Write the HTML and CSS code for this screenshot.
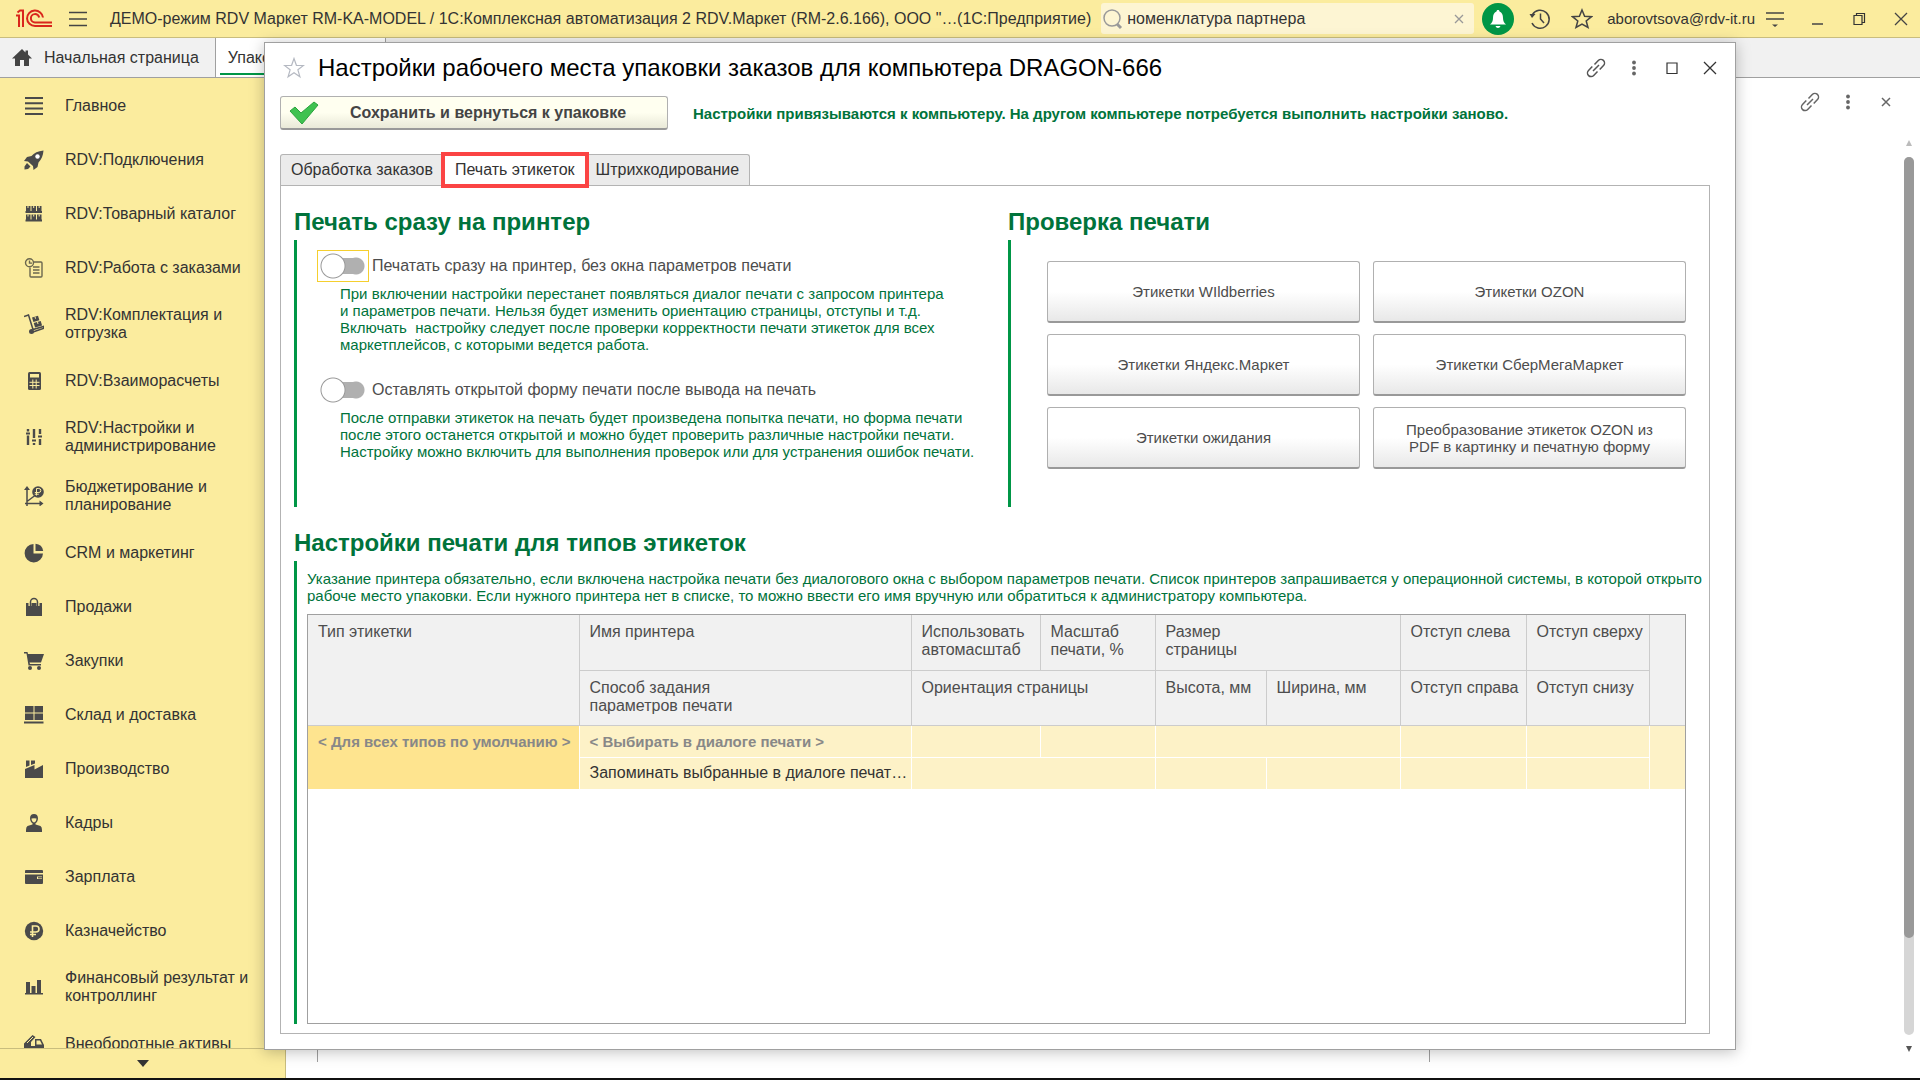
FILE: index.html
```html
<!DOCTYPE html>
<html lang="ru">
<head>
    <meta charset="UTF-8">
    <meta name="viewport" content="width=device-width, initial-scale=1.0">
    <title>Настройки рабочего места упаковки заказов</title>
    <link rel="stylesheet" href="styles.css">
</head>
<body>

    <header class="topbar">
        <svg class="logo" width="38" height="20" viewBox="0 0 38 20" fill="none" stroke="#d9261c" stroke-width="2">
            <path d="M1 6.500h3V18M2.500 3.500L5 1.500h3V18" />
            <path d="M28 8.500a8 7.700 0 1 0-8 8.500h17" />
            <path d="M24.200 8.500a4.200 4.200 0 1 0-4.200 5h17" />
        </svg>
        <button class="icon-btn menu-btn" aria-label="Меню">
            <svg width="20" height="18" viewBox="0 0 20 18" stroke="#444" stroke-width="1.5"><path d="M1 2.5h18M1 9h18M1 15.5h18" /></svg>
        </button>
        <span class="app-title">ДЕМО-режим RDV Маркет RM-KA-MODEL / 1С:Комплексная автоматизация 2 RDV.Маркет (RM-2.6.166), ООО "…</span>
        <span class="app-kind">(1С:Предприятие)</span>
        <div class="search">
            <svg width="22" height="22" viewBox="0 0 22 22" fill="none" stroke="#999"><circle cx="10" cy="10" r="8" stroke-width="1.5" /><path d="M15 16l4 4" stroke-width="3" /></svg>
            <input type="text" value="номенклатура партнера" aria-label="Поиск">
            <button class="icon-btn" aria-label="Очистить">
                <svg width="10" height="10" viewBox="0 0 10 10" stroke="#999" stroke-width="1.3"><path d="M1 1l8 8M9 1l-8 8" /></svg>
            </button>
        </div>
        <button class="icon-btn bell" aria-label="Уведомления">
            <svg width="20" height="20" viewBox="0 0 20 20" fill="#fff"><path d="M10 1c-1 0-1.500.700-1.500 1.500C6 3.500 5 6 5 9c0 3-1 5-3 6.500h16C16 14 15 12 15 9c0-3-1-5.500-3.500-6.500C11.500 1.700 11 1 10 1zM7.500 17h5c-.5 1.300-1.300 2-2.500 2s-2-.7-2.500-2z" /></svg>
        </button>
        <div class="top-tools">
            <button class="icon-btn" aria-label="История">
                <svg width="22" height="22" viewBox="0 0 22 22" fill="none" stroke="#444" stroke-width="1.5"><path d="M3.500 6.500A9 9 0 1 1 3 15M11.500 5.500V11l3.500 4" /><path d="M.5 6h6L3 10z" fill="#444" stroke="none" /></svg>
            </button>
            <button class="icon-btn" aria-label="Избранное">
                <svg width="22" height="22" viewBox="0 0 22 22" fill="none" stroke="#444" stroke-width="1.5"><path d="M11 2l2.600 6.300 6.900.4-5.300 4.300 1.800 6.500L11 16l-6 3.500 1.800-6.500L1.500 8.700l6.900-.4z" /></svg>
            </button>
        </div>
        <a class="user" href="#">aborovtsova@rdv-it.ru</a>
        <div class="win-tools">
            <button class="icon-btn" aria-label="Сервис">
                <svg width="20" height="20" viewBox="0 0 20 20" stroke="#444" stroke-width="1.500"><path d="M1 4h18M1 10h18" /><path d="M7 15.500h6L10 18z" fill="#444" stroke="none" /></svg>
            </button>
            <button class="icon-btn" aria-label="Свернуть">
                <svg width="20" height="20" viewBox="0 0 20 20" stroke="#444" stroke-width="1.500"><path d="M5 15h11" /></svg>
            </button>
            <button class="icon-btn" aria-label="Восстановить">
                <svg width="20" height="20" viewBox="0 0 20 20" fill="none" stroke="#333" stroke-width="1.200"><path d="M5 6.500h8v9H5zM7.500 6.500V4.500h8v9H13" /></svg>
            </button>
            <button class="icon-btn" aria-label="Закрыть">
                <svg width="20" height="20" viewBox="0 0 20 20" stroke="#444" stroke-width="1.300"><path d="M4 4l12 12M16 4L4 16" /></svg>
            </button>
        </div>
    </header>

    <nav class="page-tabs">
        <a class="page-tab" href="#">
            <svg width="20" height="18" viewBox="0 0 20 18" fill="#444"><path d="M10 0L0 9.500h3V17h5v-6h4v6h5V9.500h3L16 5.500V1.500h-2.500v2z" /></svg>
            Начальная страница
        </a>
        <a class="page-tab current" href="#">Упако</a>
    </nav>

    <div class="main">
        <aside class="sidebar">
            <ul class="sections">
                <li><a href="#">
                    <svg viewBox="0 0 20 20" stroke="#4a4a4a" stroke-width="2"><path d="M1 2h18M1 7.300h18M1 12.600h18M1 18h18" /></svg>
                    <span>Главное</span></a></li>
                <li><a href="#">
                    <svg viewBox="0 0 20 20"><path d="M19.500.500C14 1 10 3 7.500 6L3 7 0 11l4 .5L9 16l.5 4 4-3 1-4.500c3-3 4.700-7 5-12zM3 13l-2.500 3.500L.500 19.500 4 19l2.500-2.500z" /><circle cx="13.500" cy="6.500" r="2.200" fill="#fff" /></svg>
                    <span>RDV:Подключения</span></a></li>
                <li><a href="#">
                    <svg viewBox="0 0 20 20"><path d="M2 2h4.500v6H2zM7.500 2H12v6H7.500zM13 2h4.500v6H13zM2 10.500h4.500V16H2zM7.500 10.500H12V16H7.500zM13 10.500h4.500V16H13zM1.500 7h16.500v2H1.500zM1.500 15.500h16.500v2H1.500z" /><path d="M4 2v2M9.700 2v2M15.200 2v2M4 10.500v2M9.700 10.500v2M15.200 10.500v2" stroke="#fbec9e" /></svg>
                    <span>RDV:Товарный каталог</span></a></li>
                <li><a href="#">
                    <svg viewBox="0 0 20 20"><g fill="none" stroke="#6b674f" stroke-width="1.400"><path d="M9.500 4H17a1 1 0 0 1 1 1v13a1 1 0 0 1-1 1H7a1 1 0 0 1-1-1V9.500M9 9h6.500M9 12h6.500M9 15h6.500" /><circle cx="5.500" cy="4.800" r="4" /><path d="M5.500 2.500v2.600H8" /></g></svg>
                    <span>RDV:Работа с заказами</span></a></li>
                <li><a href="#">
                    <svg viewBox="0 0 20 20"><path d="M0 2.500L4.500 1 9 15.500l10.500-3 .5 1.800L9 18" fill="none" stroke="#4a4a4a" stroke-width="1.500" /><circle cx="7.500" cy="17.500" r="2.500" /><path d="M8 3.500l6-1.700 1.400 4.500-6 1.800zM9.700 9l7-2 1.400 4.500-7 2z" /><path d="M11 2.700l.5 2M13.500 8l.5 2" stroke="#fbec9e" /></svg>
                    <span>RDV:Комплектация и отгрузка</span></a></li>
                <li><a href="#">
                    <svg viewBox="0 0 20 20"><rect x="4" y="1" width="13" height="18" rx="1.500" /><path d="M6 3h9v3.500H6z" fill="#fbec9e" /><path d="M5.500 11.300h10M5.500 14.500h10M8.800 8.500v9M12.200 8.500v9" stroke="#fbec9e" /></svg>
                    <span>RDV:Взаиморасчеты</span></a></li>
                <li><a href="#">
                    <svg viewBox="0 0 20 20" stroke="#4a4a4a"><path d="M4 2v2.500M4 8.500V18M10 2v9M10 16v2M16 2v5M16 12v6" stroke-width="2.400" /><path d="M2 6.500h4M8 13.500h4M14 9.500h4" stroke-width="2" /></svg>
                    <span>RDV:Настройки и администрирование</span></a></li>
                <li><a href="#">
                    <svg viewBox="0 0 20 20"><path d="M3 2v18M1 17.500h17M3 15.500l8-6" fill="none" stroke="#4a4a4a" stroke-width="1.500" /><path d="M0 4l3-4 3 4zM15.500 14.500l4 3-4 3z" /><circle cx="14" cy="6" r="5.800" /><path d="M12.500 9.500v-7h2.300a2 2 0 0 1 0 4h-4M10.800 8.200h4" fill="none" stroke="#fbec9e" /></svg>
                    <span>Бюджетирование и планирование</span></a></li>
                <li><a href="#">
                    <svg viewBox="0 0 20 20"><path d="M9.500 1v9.500H19A9.200 9.200 0 1 1 9.500 1z" /><path d="M11.500.800A8.600 8.600 0 0 1 19.200 8H11.500z" /></svg>
                    <span>CRM и маркетинг</span></a></li>
                <li><a href="#">
                    <svg viewBox="0 0 20 20"><path d="M2 6h16v13H2z" /><path d="M6 9V5a4 3.800 0 0 1 8 0v4" fill="none" stroke="#fbec9e" stroke-width="3" /><path d="M6.500 9V5a3.500 3.500 0 0 1 7 0v4" fill="none" stroke="#4a4a4a" stroke-width="1.500" /></svg>
                    <span>Продажи</span></a></li>
                <li><a href="#">
                    <svg viewBox="0 0 20 20"><path d="M0 1h3.500l.5 2h16l-3 8.500H5.500l.5 1.500h11v1.500H4.500L2.500 2.500H0z" /><circle cx="6" cy="17" r="2" /><circle cx="15" cy="17" r="2" /></svg>
                    <span>Закупки</span></a></li>
                <li><a href="#">
                    <svg viewBox="0 0 20 20"><path d="M1 1h8.500v6.500H1zM10.500 1H19v6.500h-8.500zM1 8.500h8.500V15H1zM10.500 8.500H19V15h-8.500zM0 16.500h19.500v2H0z" /></svg>
                    <span>Склад и доставка</span></a></li>
                <li><a href="#">
                    <svg viewBox="0 0 20 20"><path d="M1 19v-9l9.500-4v4.500L19 6v13zM2 1.500h3.500v5L2 8zM7 1.500h4v3L7 6z" /></svg>
                    <span>Производство</span></a></li>
                <li><a href="#">
                    <svg viewBox="0 0 20 20"><path d="M10 1c2.500 0 4 1.500 4 4.300 0 2.200-1 4.200-2.500 5v1.200l5 1.500q1.500 1 1.500 4v2H2v-2q0-3 1.500-4l5-1.500v-1.200C7 9.500 6 7.500 6 5.300 6 2.500 7.500 1 10 1z" /><path d="M7.500 5.500q2.500-.5 5 0-.2 3.500-2.500 4-2.300-.5-2.500-4z" fill="#fbec9e" /></svg>
                    <span>Кадры</span></a></li>
                <li><a href="#">
                    <svg viewBox="0 0 20 20"><path d="M1 6V4q0-1 1-1h16q1 0 1 1v2zM1 7.500h18V16q0 1-1 1H2q-1 0-1-1z" /><path d="M13 9.500h5V12h-5z" fill="#fbec9e" /><path d="M14 10.200h4v1.200h-4z" /></svg>
                    <span>Зарплата</span></a></li>
                <li><a href="#">
                    <svg viewBox="0 0 20 20"><circle cx="10" cy="10" r="9.200" /><path d="M8.500 16V5H12a3 3 0 0 1 0 6H6M6 13.500h6" fill="none" stroke="#fbec9e" stroke-width="1.600" /></svg>
                    <span>Казначейство</span></a></li>
                <li><a href="#">
                    <svg viewBox="0 0 20 20"><path d="M2 5h4v11H2zM7.500 9h4v7h-4zM13 3h4v13h-4zM1 16h18v1.500H1z" /></svg>
                    <span>Финансовый результат и контроллинг</span></a></li>
                <li><a href="#">
                    <svg viewBox="0 0 20 20"><path d="M0 9.500L8.500 1l3 2L7 8v4h4V5h6l3 6v6h-2a2.500 2.500 0 0 0-5 0H8a2.500 2.500 0 0 0-5 0H0z" /><path d="M12.500 6.500H16l2 4h-5.500z" fill="#fbec9e" /><path d="M3 9l6-6" stroke="#fbec9e" /><circle cx="5.500" cy="17.500" r="2" /><circle cx="15.500" cy="17.500" r="2" /></svg>
                    <span>Внеоборотные активы</span></a></li>
            </ul>
            <button class="scroll-more" aria-label="Прокрутить вниз">
                <svg width="12" height="7" viewBox="0 0 12 7" fill="#333"><path d="M0 0h12L6 7z" /></svg>
            </button>
        </aside>

        <div class="workspace">
            <div class="workspace-tools">
                <button class="icon-btn" aria-label="Ссылка">
                    <svg width="20" height="20" viewBox="0 0 20 20" fill="none" stroke="#666" stroke-width="1.500"><path d="M8.500 6.500l3.800-4a3.500 3.500 0 0 1 5.200 5l-3.800 4M11.500 13.500l-3.800 4a3.500 3.500 0 0 1-5.200-5l3.800-4M7 13l6-6" /></svg>
                </button>
                <button class="icon-btn" aria-label="Ещё">
                    <svg width="20" height="20" viewBox="0 0 20 20" fill="#666"><circle cx="10" cy="4.500" r="1.900" /><circle cx="10" cy="10" r="1.900" /><circle cx="10" cy="15.500" r="1.900" /></svg>
                </button>
                <button class="icon-btn" aria-label="Закрыть">
                    <svg width="20" height="20" viewBox="0 0 20 20" stroke="#666" stroke-width="1.500"><path d="M6 6l8 8M14 6l-8 8" /></svg>
                </button>
            </div>
            <div class="workspace-body"></div>
            <div class="scrollbar">
                <svg width="6" height="6" viewBox="0 0 6 6" fill="#bbb"><path d="M3 0l3 6H0z" /></svg>
                <div class="track"><div class="thumb"></div></div>
                <svg width="6" height="6" viewBox="0 0 6 6" fill="#555"><path d="M0 0h6L3 6z" /></svg>
            </div>
        </div>
    </div>

    <div class="dialog" role="dialog" aria-labelledby="dialog-title">
        <div class="dialog-head">
            <button class="icon-btn" aria-label="В избранное">
                <svg width="22" height="22" viewBox="0 0 22 22" fill="none" stroke="#b5b9c2" stroke-width="1.200"><path d="M11 1.500l2.400 6.800 7.100.2-5.600 4.300 2 7L11 15.700l-5.900 4.100 2-7L1.500 8.500l7.100-.2z" /></svg>
            </button>
            <h1 id="dialog-title">Настройки рабочего места упаковки заказов для компьютера DRAGON-666</h1>
            <div class="dialog-tools">
                <button class="icon-btn" aria-label="Ссылка">
                    <svg width="20" height="20" viewBox="0 0 20 20" fill="none" stroke="#555" stroke-width="1.500"><path d="M8.500 6.500l3.800-4a3.500 3.500 0 0 1 5.200 5l-3.800 4M11.500 13.500l-3.800 4a3.500 3.500 0 0 1-5.200-5l3.800-4M7 13l6-6" /></svg>
                </button>
                <button class="icon-btn" aria-label="Ещё">
                    <svg width="20" height="20" viewBox="0 0 20 20" fill="#666"><circle cx="10" cy="4.500" r="1.900" /><circle cx="10" cy="10" r="1.900" /><circle cx="10" cy="15.500" r="1.900" /></svg>
                </button>
                <button class="icon-btn" aria-label="Развернуть">
                    <svg width="20" height="20" viewBox="0 0 20 20" fill="none" stroke="#333" stroke-width="1.200"><path d="M5 5h10v10.500H5z" /></svg>
                </button>
                <button class="icon-btn" aria-label="Закрыть">
                    <svg width="20" height="20" viewBox="0 0 20 20" stroke="#333" stroke-width="1.300"><path d="M4 4l12 12M16 4L4 16" /></svg>
                </button>
            </div>
        </div>

        <div class="command-bar">
            <button class="save-btn">
                <svg width="30" height="24" viewBox="0 0 30 24"><path d="M1 10l5-4 6 6L25 1l4 3-16 19z" fill="#3fc250" stroke="#2ba33d" /></svg>
                Сохранить и вернуться к упаковке
            </button>
            <p class="note">Настройки привязываются к компьютеру. На другом компьютере потребуется выполнить настройки заново.</p>
        </div>

        <div class="tabs" role="tablist">
            <button class="tab" role="tab">Обработка заказов</button>
            <button class="tab active" role="tab" aria-selected="true">Печать этикеток</button>
            <button class="tab" role="tab">Штрихкодирование</button>
        </div>

        <div class="panel">
            <div class="top-groups">
                <section class="group">
                    <h2>Печать сразу на принтер</h2>
                    <div class="group-body">
                        <label class="switch focused">
                            <input type="checkbox">
                            Печатать сразу на принтер, без окна параметров печати
                        </label>
                        <p class="hint">При включении настройки перестанет появляться диалог печати с запросом принтера<br>и параметров печати. Нельзя будет изменить ориентацию страницы, отступы и т.д.<br>Включать&nbsp; настройку следует после проверки корректности печати этикеток для всех<br>маркетплейсов, с которыми ведется работа.</p>
                        <label class="switch">
                            <input type="checkbox">
                            Оставлять открытой форму печати после вывода на печать
                        </label>
                        <p class="hint">После отправки этикеток на печать будет произведена попытка печати, но форма печати<br>после этого останется открытой и можно будет проверить различные настройки печати.<br>Настройку можно включить для выполнения проверок или для устранения ошибок печати.</p>
                    </div>
                </section>

                <section class="group">
                    <h2>Проверка печати</h2>
                    <div class="group-body print-tests">
                        <button class="test-btn">Этикетки WIldberries</button>
                        <button class="test-btn">Этикетки OZON</button>
                        <button class="test-btn">Этикетки Яндекс.Маркет</button>
                        <button class="test-btn">Этикетки СберМегаМаркет</button>
                        <button class="test-btn">Этикетки ожидания</button>
                        <button class="test-btn">Преобразование этикеток OZON из<br>PDF в картинку и печатную форму</button>
                    </div>
                </section>
            </div>

            <section class="group group-fill">
                <h2>Настройки печати для типов этикеток</h2>
                <div class="group-body types">
                    <p class="hint">Указание принтера обязательно, если включена настройка печати без диалогового окна с выбором параметров печати. Список принтеров запрашивается у операционной системы, в которой открыто<br>рабоче место упаковки. Если нужного принтера нет в списке, то можно ввести его имя вручную или обратиться к администратору компьютера.</p>
                    <div class="table-box">
                        <table>
                            <colgroup>
                                <col class="c-type"><col><col class="c-auto"><col class="c-scale"><col class="c-height"><col class="c-width"><col class="c-left"><col class="c-top"><col class="c-end">
                            </colgroup>
                            <thead>
                                <tr>
                                    <th rowspan="2">Тип этикетки</th>
                                    <th>Имя принтера</th>
                                    <th>Использовать автомасштаб</th>
                                    <th>Масштаб<br>печати, %</th>
                                    <th colspan="2">Размер<br>страницы</th>
                                    <th>Отступ слева</th>
                                    <th>Отступ сверху</th>
                                    <th rowspan="2"></th>
                                </tr>
                                <tr>
                                    <th>Способ задания<br>параметров печати</th>
                                    <th colspan="2">Ориентация страницы</th>
                                    <th>Высота, мм</th>
                                    <th>Ширина, мм</th>
                                    <th>Отступ справа</th>
                                    <th>Отступ снизу</th>
                                </tr>
                            </thead>
                            <tbody>
                                <tr>
                                    <td class="selected default" rowspan="2">&lt; Для всех типов по умолчанию &gt;</td>
                                    <td class="default">&lt; Выбирать в диалоге печати &gt;</td>
                                    <td></td>
                                    <td></td>
                                    <td colspan="2"></td>
                                    <td></td>
                                    <td></td>
                                    <td rowspan="2"></td>
                                </tr>
                                <tr>
                                    <td>Запоминать выбранные в диалоге печат…</td>
                                    <td colspan="2"></td>
                                    <td></td>
                                    <td></td>
                                    <td></td>
                                    <td></td>
                                </tr>
                            </tbody>
                        </table>
                    </div>
                </div>
            </section>
        </div>
    </div>

</body>
</html>
```
FILE: styles.css
```css
* {
    box-sizing: border-box;
}

body {
    margin: 0;
    height: 100vh;
    display: flex;
    flex-direction: column;
    overflow: hidden;
    position: relative;
    font-family: "Liberation Sans", Arial, sans-serif;
    font-size: 16px;
    color: #333;
    background: #fff;
    border-bottom: 2px solid #111;
}

button,
input {
    font-family: inherit;
    font-size: inherit;
    color: inherit;
}

a {
    color: inherit;
    text-decoration: none;
}

h1,
h2,
p,
ul {
    margin: 0;
    padding: 0;
}

svg {
    display: block;
    flex: none;
}

.icon-btn {
    display: flex;
    align-items: center;
    justify-content: center;
    padding: 0;
    border: none;
    background: none;
    cursor: pointer;
}

/* top bar */
.topbar {
    display: flex;
    align-items: center;
    height: 38px;
    flex: none;
    padding: 0 9px 0 15px;
    background: #fbec9e;
    border-bottom: 1px solid #c9bd7e;
}

.menu-btn {
    margin: 0 22px 0 15px;
}

.app-title {
    flex: 1;
    min-width: 0;
    white-space: nowrap;
}

.app-kind {
    margin: 0 10px 0 4px;
}

.search {
    display: flex;
    align-items: center;
    width: 373px;
    height: 31px;
    padding: 0 10px 0 1px;
    background: #fdf5d3;
    border-radius: 3px;
}

.search input {
    flex: 1;
    min-width: 0;
    padding: 0 3px;
    border: none;
    outline: none;
    background: none;
}

.bell {
    width: 32px;
    height: 32px;
    margin: 0 15px 0 8px;
    border-radius: 50%;
    background: #009646;
}

.top-tools {
    display: flex;
    gap: 20px;
    margin-right: 14px;
}

.user {
    font-size: 15px;
}

.win-tools {
    display: flex;
    gap: 22px;
    margin-left: 10px;
}

/* open pages */
.page-tabs {
    display: flex;
    height: 40px;
    flex: none;
    background: #f1f1f1;
    border-bottom: 1px solid #a0a0a0;
}

.page-tab {
    display: flex;
    align-items: center;
    gap: 12px;
    padding: 0 16px 0 12px;
    border-right: 1px solid #a0a0a0;
}

.page-tab.current {
    width: 170px;
    background: #fff linear-gradient(#009646, #009646) no-repeat 4px 35px / 160px 2px;
}

/* sections */
.main {
    display: flex;
    flex: 1;
    min-height: 0;
}

.sidebar {
    display: flex;
    flex-direction: column;
    width: 286px;
    background: #fbec9e;
    border-right: 1px solid #c9bd7e;
}

.sections {
    flex: 1;
    min-height: 0;
    overflow: hidden;
    list-style: none;
}

.sections a {
    display: flex;
    align-items: center;
    gap: 21px;
    min-height: 54px;
    padding: 12px 36px 11px 24px;
    line-height: 18px;
}

.sections svg {
    width: 20px;
    height: 20px;
    fill: #4a4a4a;
}

.scroll-more {
    display: flex;
    align-items: center;
    justify-content: center;
    height: 30px;
    border: none;
    border-top: 1px solid #c9bd7e;
    background: none;
}

/* page under the dialog */
.workspace {
    flex: 1;
    display: flex;
    flex-direction: column;
    position: relative;
}

.workspace-tools {
    display: flex;
    justify-content: flex-end;
    gap: 18px;
    padding: 14px 24px 14px 0;
}

.workspace-body {
    flex: 1;
    margin: 0 490px 16px 31px;
    border-left: 1px solid #a0a0a0;
    border-right: 1px solid #a0a0a0;
}

.scrollbar {
    position: absolute;
    top: 62px;
    right: 6px;
    bottom: 26px;
    width: 10px;
    display: flex;
    flex-direction: column;
    align-items: center;
    gap: 11px;
}

.track {
    flex: 1;
    width: 10px;
    border-radius: 5px;
    background: #d6d6d6;
}

.thumb {
    height: 89%;
    border-radius: 5px;
    background: #999;
}

/* dialog */
.dialog {
    position: absolute;
    top: 42px;
    right: 184px;
    bottom: 28px;
    left: 264px;
    display: flex;
    flex-direction: column;
    padding: 0 25px 15px 15px;
    background: #fff;
    border: 1px solid #a0a0a0;
    box-shadow: 0 2px 14px rgba(0, 0, 0, 0.25);
}

.dialog-head {
    display: flex;
    align-items: center;
    gap: 13px;
    height: 50px;
    margin: 0 0 3px 3px;
}

.dialog-head h1 {
    flex: 1;
    font-size: 24px;
    font-weight: normal;
    color: #000;
}

.dialog-tools {
    display: flex;
    gap: 18px;
    margin-right: -10px;
}

.command-bar {
    display: flex;
    align-items: center;
    gap: 25px;
}

.save-btn {
    display: flex;
    align-items: center;
    gap: 31px;
    width: 388px;
    height: 34px;
    padding: 0 8px;
    font-weight: bold;
    color: #444;
    background: linear-gradient(#fffff0 50%, #e9e9d8);
    border: 1px solid #b0b0b0;
    border-bottom: 2px solid #999;
    border-radius: 3px;
}

.note {
    font-size: 15px;
    font-weight: bold;
    color: #00733b;
}

.tabs {
    display: flex;
    margin-top: 24px;
}

.tab {
    height: 31px;
    padding: 0 10px;
    background: #ebebeb;
    border: 1px solid #b3b3b3;
    border-bottom: none;
}

.tab:first-child {
    border-radius: 3px 0 0 0;
}

.tab:last-child {
    border-radius: 0 3px 0 0;
}

.tab.active {
    height: 36px;
    margin: -2px -4px -3px -3px;
    background: #fff;
    border: 4px solid #fb4444;
    z-index: 1;
}

.panel {
    flex: 1;
    min-height: 0;
    display: flex;
    flex-direction: column;
    gap: 21px;
    padding: 21px 23px 9px 13px;
    border: 1px solid #b3b3b3;
}

.top-groups {
    display: grid;
    grid-template-columns: minmax(0, 1fr) 678px;
    gap: 36px;
}

.group {
    display: flex;
    flex-direction: column;
}

.group-fill {
    flex: 1;
    min-height: 0;
}

h2 {
    font-size: 24px;
    line-height: 30px;
    color: #00733b;
}

.group-body {
    flex: 1;
    min-height: 0;
    margin-top: 3px;
    border-left: 3px solid #009646;
}

.top-groups .group-body {
    height: 267px;
    flex: none;
    padding: 10px 0 0 20px;
}

.switch {
    display: flex;
    align-items: center;
    gap: 3px;
    color: #4d4d4d;
}

.switch input {
    appearance: none;
    width: 52px;
    height: 32px;
    margin: 0;
    border: 1px solid transparent;
    background:
        radial-gradient(circle at 15px 15px, #fff 11px, #999 12px, transparent 13px),
        radial-gradient(circle at 38px 15px, #b0b0b0 8px, transparent 9px),
        linear-gradient(#b0b0b0, #b0b0b0) no-repeat 15px 7px / 23px 16px;
}

.switch.focused input {
    border-color: #f5cf2e;
}

.hint {
    font-size: 15px;
    line-height: 17px;
    color: #00733b;
}

.switch + .hint {
    margin: 3px 0 21px 23px;
    white-space: nowrap;
}

.top-groups .print-tests {
    display: grid;
    grid-template-columns: 1fr 1fr;
    grid-auto-rows: 62px;
    gap: 11px 13px;
    padding: 21px 0 0 36px;
}

.test-btn {
    padding: 0;
    font-size: 15px;
    line-height: 17px;
    color: #4d4d4d;
    background: linear-gradient(#fff 50%, #e8e8e8);
    border: 1px solid #b0b0b0;
    border-bottom: 2px solid #999;
    border-radius: 3px;
}

.types {
    display: flex;
    flex-direction: column;
    gap: 10px;
    padding: 9px 0 0 10px;
}

.types .hint {
    white-space: nowrap;
}

.table-box {
    flex: 1;
    min-height: 0;
    border: 1px solid #a0a0a0;
}

table {
    width: 100%;
    table-layout: fixed;
    border-collapse: collapse;
}

th {
    height: 55px;
    padding: 8px 0 0 10px;
    font-weight: normal;
    line-height: 18px;
    text-align: left;
    vertical-align: top;
    color: #4d4d4d;
    background: #f1f1f1;
    border: 1px solid #ccc;
}

td {
    height: 32px;
    padding: 0 2px 0 10px;
    overflow: hidden;
    white-space: nowrap;
    background: #fdf2c7;
    border: 1px solid #fff;
}

table tr:first-child th {
    border-top: none;
}

th:first-child[rowspan],
td:first-child[rowspan] {
    border-left: none;
}

th:last-child[rowspan],
td:last-child[rowspan] {
    border-right: none;
}

td.default {
    font-size: 15px;
    font-weight: bold;
    color: #888;
}

td.selected {
    padding-top: 7px;
    vertical-align: top;
    background: #fee48f;
}

.c-type {
    width: 271px;
}

.c-auto {
    width: 129px;
}

.c-scale {
    width: 115px;
}

.c-height {
    width: 111px;
}

.c-width {
    width: 134px;
}

.c-left {
    width: 126px;
}

.c-top {
    width: 123px;
}

.c-end {
    width: 36px;
}
```
